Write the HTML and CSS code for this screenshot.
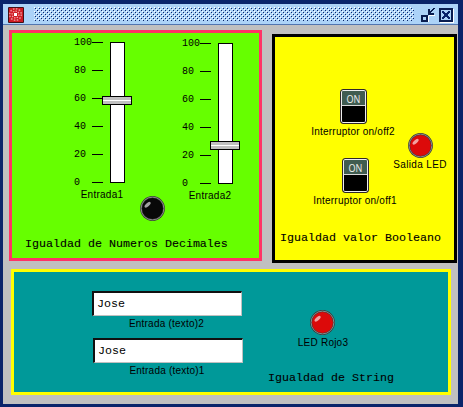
FILE: index.html
```html
<!DOCTYPE html>
<html lang="es">
<head>
<meta charset="utf-8">
<title>Igualdad</title>
<link rel="stylesheet" href="styles.css">
</head>
<body>
<svg class="defs" width="0" height="0">
  <defs>
    <symbol id="led" viewBox="0 0 25 25">
      <circle cx="12.5" cy="12.5" r="12.4" fill="#383838"/>
      <circle cx="12.5" cy="12.5" r="11.4" fill="none" stroke="#8a8a8a" stroke-width="1"/>
      <circle cx="12.5" cy="12.5" r="10.5" fill="currentColor"/>
      <ellipse cx="7.6" cy="8.8" rx="3.8" ry="1.7" transform="rotate(-42 7.6 8.8)" fill="#fff" fill-opacity=".62"/>
    </symbol>
  </defs>
</svg>
<main class="window">
  <header class="titlebar">
    <svg class="app" width="16" height="16" viewBox="0 0 16 16">
      <rect width="16" height="16" rx="1" fill="#431016"/>
      <rect x="1" y="1" width="14" height="14" fill="#cf1a22"/>
      <circle cx="7.5" cy="7.5" r="5.8" fill="none" stroke="#e98d90" stroke-width="1.6" stroke-dasharray="1.6 1.4"/>
      <circle cx="7.5" cy="7.5" r="3.4" fill="none" stroke="#f3a5a8" stroke-width="1.4" stroke-dasharray="1.4 1.2"/>
      <rect x="6" y="6" width="3" height="3" fill="#fff"/>
    </svg>
    <div class="grip"></div>
    <svg width="14" height="16" viewBox="0 0 14 16" shape-rendering="crispEdges">
      <path d="M1 15h7v-6h-1v5h-6zM8 8h6v1h-6z" fill="#fff"/>
      <rect x="0" y="8" width="7" height="7" fill="#0a1d50"/>
      <rect x="2" y="10" width="3" height="3" fill="#acd3f8"/>
      <path d="M7 2h2v2h1v-1h1v-1h1v-1h2v1h-1v1h-1v1h-1v1h-1v1h3v2h-6z" fill="#0a1d50"/>
    </svg>
    <svg class="close" width="15" height="15" viewBox="0 0 15 15" shape-rendering="crispEdges">
      <path d="M14.500 1V14.500H1" stroke="#fff" fill="none"/>
      <rect x="1" y="1" width="12" height="12" fill="#acd3f8" stroke="#0a1d50" stroke-width="2"/>
      <path d="M3 3h2v1h1v1h2v-1h1v-1h2v2h-1v1h-1v2h1v1h1v2h-2v-1h-1v-1h-2v1h-1v1h-2v-2h1v-1h1v-2h-1v-1h-1z" fill="#0a246a"/>
    </svg>
  </header>

  <div class="content">
    <section class="panel decimals">
      <div class="sliders">
        <div class="slider first">
          <div class="row">
            <div class="scale"><span>100</span><span>80</span><span>60</span><span>40</span><span>20</span><span>0</span></div>
            <div class="track"><i class="thumb"></i></div>
          </div>
          <p class="label">Entrada1</p>
        </div>
        <div class="slider second">
          <div class="row">
            <div class="scale"><span>100</span><span>80</span><span>60</span><span>40</span><span>20</span><span>0</span></div>
            <div class="track"><i class="thumb"></i></div>
          </div>
          <p class="label">Entrada2</p>
        </div>
      </div>
      <svg class="led off"><use href="#led"/></svg>
      <h2 class="caption">Igualdad de Numeros Decimales</h2>
    </section>

    <section class="panel boolean">
      <div class="controls">
        <div class="switches">
          <div class="switch"><b>ON</b></div>
          <p class="label">Interruptor on/off2</p>
          <div class="switch lower"><b>ON</b></div>
          <p class="label lower">Interruptor on/off1</p>
        </div>
        <div class="output">
          <svg class="led"><use href="#led"/></svg>
          <p class="label">Salida LED</p>
        </div>
      </div>
      <h2 class="caption">Igualdad valor Booleano</h2>
    </section>

    <section class="panel strings">
      <div class="fields">
        <div class="field">Jose</div>
        <p class="label">Entrada (texto)2</p>
        <div class="field lower">Jose</div>
        <p class="label lower">Entrada (texto)1</p>
      </div>
      <div class="result">
        <svg class="led"><use href="#led"/></svg>
        <p class="label">LED Rojo3</p>
        <h2 class="caption">Igualdad de String</h2>
      </div>
    </section>
  </div>
</main>
</body>
</html>
```
FILE: styles.css
```css
* { box-sizing: border-box; margin: 0; padding: 0; }
body {
  width: 463px;
  height: 407px;
  padding: 4px 5px 3px 3px;
  overflow: hidden;
  background: #0a246a;
  color: #000;
}
svg { display: block; flex: none; }
.defs { position: absolute; }
.window { width: 455px; height: 400px; background: #c0c0c0; }

.titlebar {
  display: flex;
  height: 21px;
  padding: 3px 4px 0 5px;
  background: #acd3f8;
  border-bottom: 1px solid #5276b0;
}
.grip {
  width: 380px;
  height: 14px;
  margin: 0 7px 0 10px;
  background:
    conic-gradient(from 0deg at 1px 1px, transparent 75%, #0a246a 0) 1px 1px / 4px 4px,
    conic-gradient(from 0deg at 1px 1px, transparent 75%, #0a246a 0) 3px 3px / 4px 4px,
    conic-gradient(from 0deg at 1px 1px, transparent 75%, #fff 0) 0 0 / 4px 4px,
    conic-gradient(from 0deg at 1px 1px, transparent 75%, #fff 0) 2px 2px / 4px 4px;
}
.close { margin: 1px 0 0 4px; }

.content {
  display: grid;
  grid-template-columns: 253px 185px;
  grid-template-rows: 233px 126px;
  column-gap: 10px;
  row-gap: 6px;
  padding: 5px 1px 0 6px;
}
.panel { border: 3px solid; }
.decimals { height: 231px; border-color: #ff3366; background: #66ff00; }
.boolean { height: 229px; margin-top: 4px; border-color: #000; background: #ffff00; }
.strings {
  grid-column: 1 / 3;
  display: flex;
  width: 440px;
  margin-left: 2px;
  border-color: #ffff00;
  background: #009999;
}

.label {
  font: 10px/12px "Liberation Sans", Arial, sans-serif;
  white-space: nowrap;
  text-align: center;
  letter-spacing: .22px;
}
.caption {
  font: 11.67px/14px "Liberation Mono", "Courier New", monospace;
  white-space: nowrap;
  -webkit-text-stroke: .1px #000;
}
.led { width: 25px; height: 25px; color: #dc0a0a; }
.led.off { color: #080808; }

.sliders { display: flex; height: 163px; }
.slider { width: 58px; }
.slider.first { margin: 9px 0 0 62px; }
.slider.second { margin: 10px 0 0 50px; }
.row { display: flex; height: 141px; }
.scale {
  display: flex;
  flex-direction: column;
  width: 29px;
  margin: -5px 7px 0 0;
  font: 10px/11px "Liberation Mono", "Courier New", monospace;
}
.scale span { display: flex; flex: none; height: 28px; }
.scale span::after {
  content: "";
  width: 11px;
  height: 1px;
  margin: 5px 0 0 auto;
  background: #000;
}
.track { width: 15px; height: 141px; border: 1px solid #000; background: #fff; }
.thumb {
  display: block;
  width: 30px;
  height: 9px;
  margin: 53px 0 0 -9px;
  border: 1px solid #000;
  background: linear-gradient(#c0c0c0 3px, #fff 3px, #fff 4px, #c0c0c0 4px);
}
.second .thumb { margin-top: 97px; }
.slider .label { width: 44px; margin: 6px 0 0 6px; letter-spacing: .25px; }
.decimals > .led { margin-left: 128px; }
.decimals .caption { margin: 16px 0 0 13px; }

.controls { display: flex; height: 172px; }
.switches { width: 86px; margin: 52px 0 0 35px; }
.switch {
  width: 27px;
  height: 35px;
  margin-left: 30px;
  border: 1px solid #302828;
  border-radius: 3px;
  background: linear-gradient(#405c50 15px, #d8d8d8 15px, #d8d8d8 16px, #000 16px);
  box-shadow: inset 0 0 0 1px #eee;
}
.switch b {
  display: block;
  color: #f0f0f0;
  font: 11px/17px "Open Sans", sans-serif;
  text-align: center;
  transform: scaleX(.82);
}
.switches .label { width: 86px; margin-top: 2px; }
.switch.lower { margin: 20px 0 0 32px; }
.switches .label.lower { margin-left: 2px; }
.output { width: 54px; margin: 96px 0 0 -3px; }
.output .led { margin-left: 15px; }
.output .label { margin-top: 1px; letter-spacing: .35px; }
.boolean .caption { margin: 22px 0 0 5px; }

.fields { width: 151px; margin: 19px 0 0 78px; }
.field {
  width: 150px;
  height: 25px;
  padding-left: 3px;
  border: 2px solid;
  border-color: #101010 #c0c0c0 #c0c0c0 #101010;
  border-right-width: 1px;
  border-bottom-width: 1px;
  background: #fff;
  font: 11.67px/22px "Liberation Mono", "Courier New", monospace;
}
.fields .label { width: 149px; margin-top: 2px; }
.field.lower { margin: 8px 0 0 1px; }
.fields .label.lower { width: 150px; }
.result { margin: 38px 0 0 25px; }
.result .led { margin-left: 42px; }
.result .label { width: 52px; margin: 2px 0 0 29px; }
.result .caption { margin-top: 22px; }
```
